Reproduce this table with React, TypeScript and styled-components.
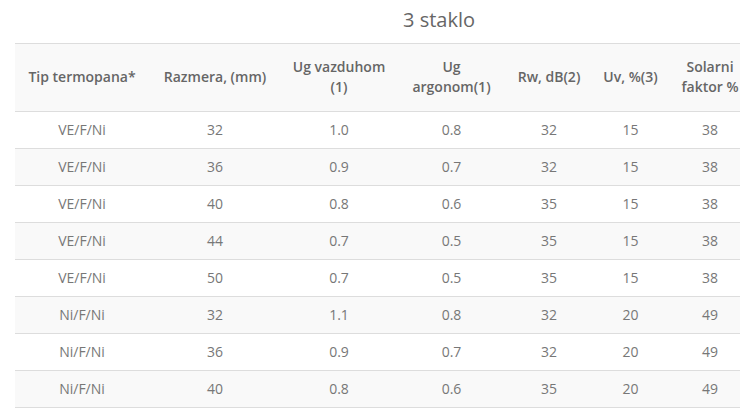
import React from "react";
import styled, { createGlobalStyle } from "styled-components";

const Global = createGlobalStyle`
  html, body { margin: 0; padding: 0; background: #fff; overflow: hidden; }
  body { font-family: "Open Sans", "Liberation Sans", sans-serif; }
`;

const Viewport = styled.div`
  width: 100%;
  overflow: hidden;
`;

const Wrapper = styled.div`
  width: 848px;
  margin-left: 15px;
`;

const Title = styled.h3`
  margin: 6px 0 9px;
  font-size: 20px;
  line-height: 28px;
  font-weight: 400;
  color: #666;
  text-align: center;
`;

const Table = styled.table`
  width: 736px;
  table-layout: fixed;
  border-collapse: collapse;
  font-size: 14px;
  line-height: 20px;
`;

const HeadCell = styled.th`
  background: #f9f9f9;
  color: #666;
  font-weight: 600;
  text-align: center;
  vertical-align: middle;
  padding: 13px 8px 14px;
  border-top: 1px solid #ddd;
  border-bottom: 1px solid #ddd;
  height: 40px;
`;

const Row = styled.tr<{ $striped: boolean }>`
  background: ${(p) => (p.$striped ? "#f9f9f9" : "#fff")};
`;

const Cell = styled.td`
  color: #777;
  text-align: center;
  padding: 8px;
  border-bottom: 1px solid #ddd;
`;

const widths = [134, 132, 116, 109, 86, 77, 82];
const headers = [
  "Tip termopana*",
  "Razmera, (mm)",
  "Ug vazduhom (1)",
  "Ug argonom(1)",
  "Rw, dB(2)",
  "Uv, %(3)",
  "Solarni faktor %",
];

const rows = [
  ["VE/F/Ni", "32", "1.0", "0.8", "32", "15", "38"],
  ["VE/F/Ni", "36", "0.9", "0.7", "32", "15", "38"],
  ["VE/F/Ni", "40", "0.8", "0.6", "35", "15", "38"],
  ["VE/F/Ni", "44", "0.7", "0.5", "35", "15", "38"],
  ["VE/F/Ni", "50", "0.7", "0.5", "35", "15", "38"],
  ["Ni/F/Ni", "32", "1.1", "0.8", "32", "20", "49"],
  ["Ni/F/Ni", "36", "0.9", "0.7", "32", "20", "49"],
  ["Ni/F/Ni", "40", "0.8", "0.6", "35", "20", "49"],
];

export default function App() {
  return (
    <>
      <Global />
      <Viewport>
        <Wrapper>
          <Title>3 staklo</Title>
          <Table>
            <colgroup>
              {widths.map((w, i) => (
                <col key={i} style={{ width: w }} />
              ))}
            </colgroup>
            <thead>
              <tr>
                {headers.map((h) => (
                  <HeadCell key={h}>{h}</HeadCell>
                ))}
              </tr>
            </thead>
            <tbody>
              {rows.map((r, i) => (
                <Row key={i} $striped={i % 2 === 1}>
                  {r.map((c, j) => (
                    <Cell key={j}>{c}</Cell>
                  ))}
                </Row>
              ))}
            </tbody>
          </Table>
        </Wrapper>
      </Viewport>
    </>
  );
}
